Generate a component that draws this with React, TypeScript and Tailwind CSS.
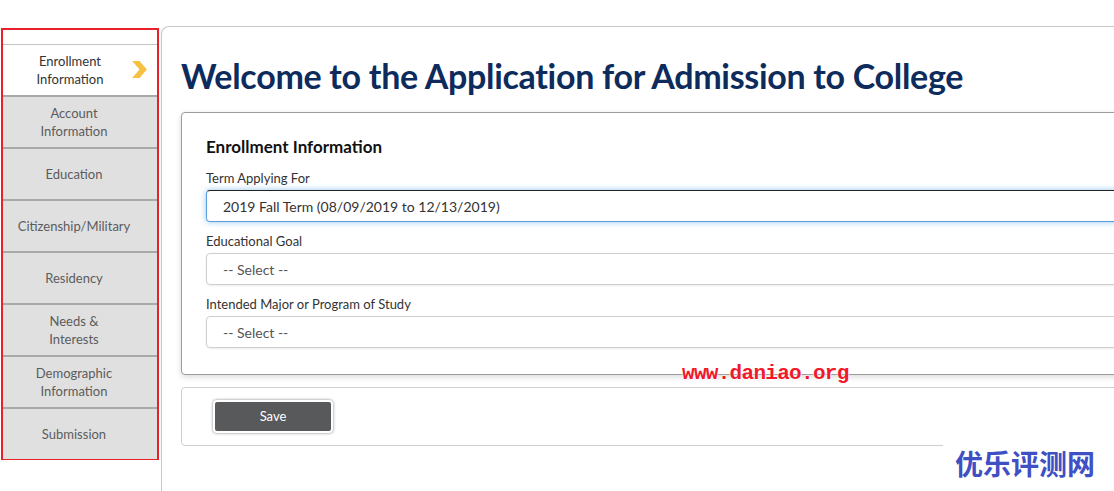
import React from "react";

const steps = [
  { label: ["Enrollment", "Information"], active: true },
  { label: ["Account", "Information"] },
  { label: ["Education"] },
  { label: ["Citizenship/Military"] },
  { label: ["Residency"] },
  { label: ["Needs &", "Interests"] },
  { label: ["Demographic", "Information"] },
  { label: ["Submission"] },
];

const fields = [
  { label: "Term Applying For", value: "2019 Fall Term (08/09/2019 to 12/13/2019)", focused: true },
  { label: "Educational Goal", value: "-- Select --" },
  { label: "Intended Major or Program of Study", value: "-- Select --" },
];

const App = () => {
  return (
    <div className="relative flex h-[491px] w-[1114px] overflow-hidden bg-white font-['Lato',sans-serif]">
      {/* sidebar */}
      <div className="mt-[28px] ml-px h-[432px] w-[158px] shrink-0 border-2 border-[#e8202a] bg-white">
        <div className="h-[14px]" />
        {steps.map((s, i) =>
          s.active ? (
            <div
              key={i}
              className="relative flex h-[51px] flex-col items-center justify-center border-t border-[#c4c4c4] bg-white pr-[20px] text-[13px] leading-[18px] text-[#333]"
            >
              {s.label.map((l) => (
                <span key={l}>{l}</span>
              ))}
              <svg className="absolute right-[8px] top-[15px]" width="19" height="19" viewBox="0 0 18 18">
                <path d="M2 1h7l7 8-7 8H2l7-8z" fill="#f6c142" />
              </svg>
            </div>
          ) : (
            <div
              key={i}
              className="flex h-[52px] flex-col items-center justify-center border-t-2 border-[#a9a9a9] bg-[#e0e0e0] pr-[12px] text-[13px] leading-[18px] text-[#5c5c5c]"
            >
              {s.label.map((l) => (
                <span key={l}>{l}</span>
              ))}
            </div>
          )
        )}
      </div>

      {/* main panel */}
      <div className="mt-[26px] ml-[2px] w-[1100px] shrink-0 rounded-tl-[8px] border-t border-l border-[#c8c8c8] pl-[19px]">
        <h1 className="mt-[27px] text-[34px] font-bold leading-[44px] tracking-[-0.3px] text-[#0d2b5c]">
          Welcome to the Application for Admission to College
        </h1>

        <div className="mt-[14px] h-[263px] w-[1000px] rounded-[4px] border border-[#9c9c9c] bg-white pl-[24px] pt-[22px] shadow-[0_2px_6px_rgba(0,0,0,0.15)]">
          <h2 className="text-[17px] font-bold leading-[24px] text-[#111]">Enrollment Information</h2>
          {fields.map((f) => (
            <div key={f.label} className="mt-[10px]">
              <div className="text-[13px] leading-[18px] text-[#333]">{f.label}</div>
              <div
                className={
                  f.focused
                    ? "mt-[3px] flex h-[32px] items-center rounded-[4px] border border-[#5b9dd9] border-t-[#222] pl-[16px] text-[14px] text-[#333] shadow-[0_0_6px_rgba(102,175,233,0.7)]"
                    : "mt-[3px] flex h-[32px] items-center rounded-[4px] border border-[#cfcfcf] pl-[16px] text-[14px] text-[#555] shadow-[0_1px_2px_rgba(0,0,0,0.08)]"
                }
              >
                {f.value}
              </div>
            </div>
          ))}
        </div>

        <div className="mt-[12px] flex h-[59px] w-[1000px] items-center rounded-[4px] border border-[#cfcfcf] bg-white pl-[31px]">
          <button className="h-[33px] w-[120px] rounded-[4px] border-2 border-white bg-[#58595b] text-[13px] text-white shadow-[0_0_3px_rgba(0,0,0,0.5)]">
            Save
          </button>
        </div>
      </div>

      {/* watermarks */}
      <div className="absolute left-[682px] top-[361px] font-['Liberation_Mono',monospace] text-[21px] font-bold leading-[26px] tracking-[-0.7px] text-[#f0182b] [text-shadow:0_0_2px_#fff,0_0_2px_#fff]">
        www.daniao.org
      </div>
      <div className="absolute left-[943px] top-[440px] flex h-[51px] w-[171px] items-start justify-start bg-white pl-[12px] pt-[6px] font-['Noto_Sans_CJK_SC',sans-serif] text-[28px] font-bold leading-[34px] text-[#3f4fc4]">
        优乐评测网
      </div>
    </div>
  );
};

export default App;
